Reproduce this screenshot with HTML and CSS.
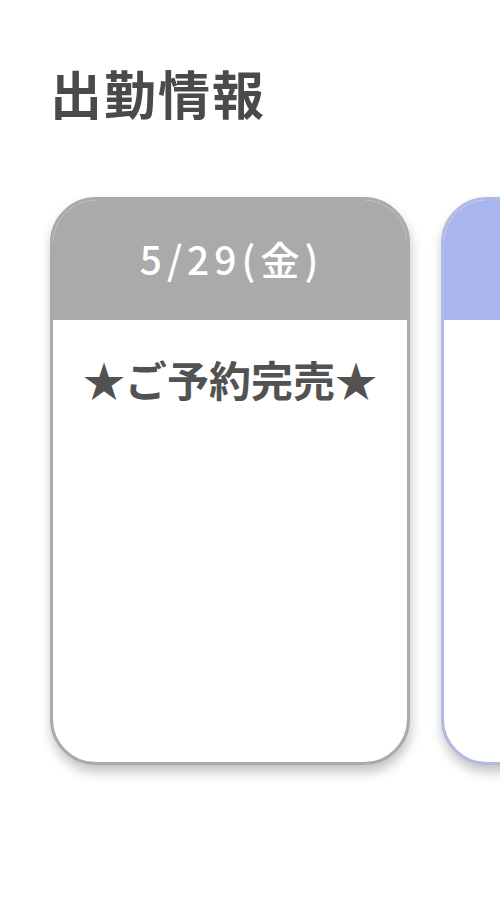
FILE: index.html
```html
<!DOCTYPE html>
<html lang="ja">
<head>
<meta charset="utf-8">
<title>出勤情報</title>
<link rel="stylesheet" href="styles.css">
</head>
<body>
<main class="page">
  <h1 class="title">出勤情報</h1>
  <div class="cards">
    <section class="card card-gray">
      <div class="card-head"><span class="date">5/29(金)</span></div>
      <div class="card-body"><p class="status">★ご予約完売★</p></div>
    </section>
    <section class="card card-blue">
      <div class="card-head"></div>
      <div class="card-body"></div>
    </section>
  </div>
</main>
</body>
</html>
```
FILE: styles.css
```css
html, body {
  margin: 0;
  padding: 0;
  background: #ffffff;
}
body {
  width: 500px;
  height: 906px;
  overflow: hidden;
  font-family: "Noto Sans CJK JP", "Noto Sans", sans-serif;
}
.page {
  padding: 58px 0 0 50px;
}
.title {
  margin: 0;
  font-size: 52px;
  line-height: 70px;
  font-weight: 700;
  letter-spacing: 2px;
  color: #4a4a4a;
}
.cards {
  display: flex;
  gap: 31px;
  margin-top: 69px;
  padding-bottom: 30px;
}
.card {
  flex: 0 0 360px;
  box-sizing: border-box;
  height: 568px;
  border: 3px solid #aaaaaa;
  border-radius: 46px;
  overflow: hidden;
  background: #ffffff;
  box-shadow: 1px 7px 12px rgba(0, 0, 0, 0.24);
}
.card-head {
  height: 120px;
  background: #aaaaaa;
  display: flex;
  align-items: center;
  justify-content: center;
}
.card-blue {
  border-color: #b2badf;
}
.card-blue .card-head {
  background: #a8b5ee;
}
.date {
  font-family: "Noto Sans CJK JP", "Noto Sans", sans-serif;
  font-size: 39px;
  font-weight: 500;
  letter-spacing: 5px;
  color: #ffffff;
  padding-left: 3px;
  margin-top: -4px;
}
.card-body {
  padding-top: 31px;
}
.status {
  margin: 0;
  text-align: center;
  font-size: 42px;
  line-height: 56px;
  font-weight: 700;
  color: #525252;
}
```
